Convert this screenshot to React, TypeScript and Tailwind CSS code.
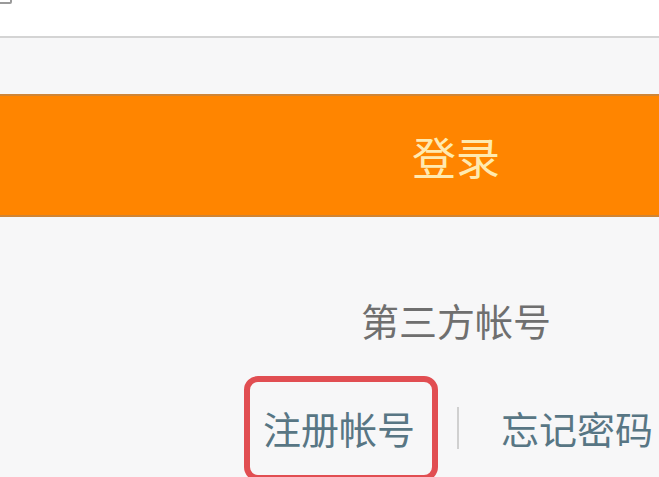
export default function App() {
  return (
    <div className="w-[659px] h-[477px] overflow-hidden bg-[#f7f7f8] font-['Noto_Sans_CJK_SC',sans-serif]">
      <div className="w-[912px]">
        {/* top input area, scrolled mostly out of view */}
        <div className="h-[38px] bg-white border-b-2 border-[#d4d4d4] flex items-start">
          <div className="w-[14px] h-[14px] -mt-[10px] -ml-[2px] border-2 border-[#9a9a9a] rounded-[2px]"></div>
        </div>

        <div className="pt-[56px]">
          <button className="w-full h-[123px] bg-[#ff8500] border-y-2 border-[#cf8536] flex items-center justify-center text-[44px] leading-none text-[#ffeab0]">
            登录
          </button>
        </div>

        <div className="mt-[79px] text-center text-[38px] leading-[48px] text-[#6f6f6f]">
          第三方帐号
        </div>

        <div className="mt-[60px] flex items-center justify-center pl-[4px]">
          <a className="relative text-[38px] leading-[48px] text-[#587684]">
            注册帐号
            <span className="absolute -left-[19px] -right-[23px] -top-[28px] -bottom-[29px] border-[6px] border-[#e14e52] rounded-[14px]"></span>
          </a>
          <div className="w-[2px] h-[42px] bg-[#d0d0d0] mx-[42px]"></div>
          <a className="text-[38px] leading-[48px] text-[#587684]">忘记密码</a>
        </div>
      </div>
    </div>
  )
}
